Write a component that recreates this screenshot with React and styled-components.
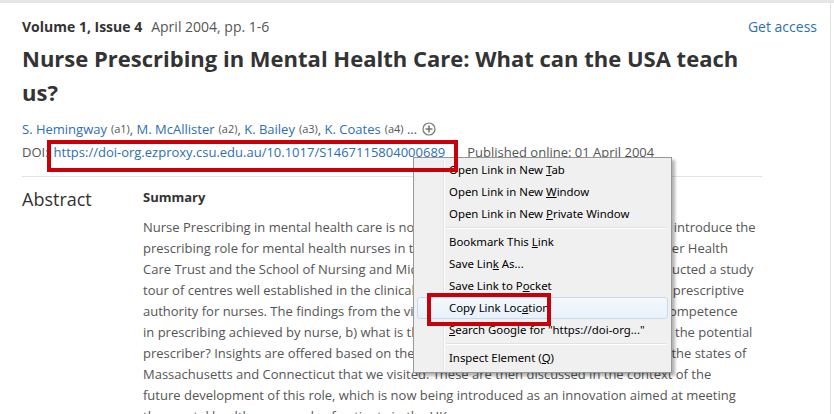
import React from "react";
import styled, { createGlobalStyle } from "styled-components";

const GlobalStyle = createGlobalStyle`
  html, body { margin: 0; padding: 0; background: #fff; }
  body { font-family: "Open Sans", "Noto Sans", sans-serif; }
`;

const Page = styled.div`
  position: relative;
  width: 834px;
  height: 414px;
  overflow: hidden;
  background: #fff;
  border-top: 3px solid #e6e6e6;
  box-sizing: border-box;
`;

const Card = styled.div`
  width: 831px;
  height: 100%;
  box-sizing: border-box;
  border-right: 1px solid #e0e0e0;
  padding: 14px 13px 0 22px;
  color: #333;
`;

const MetaRow = styled.div`
  display: flex;
  justify-content: space-between;
  align-items: center;
  font-size: 14px;
  line-height: 20px;
`;

const Issue = styled.span`
  font-weight: 700;
  color: #333;
  margin-right: 9px;
`;

const Muted = styled.span`
  color: #555;
  margin-left: ${(p) => p.$ml || 0}px;
`;

const Link = styled.a`
  color: #2d6fb0;
  text-decoration: none;
  margin-left: ${(p) => p.$ml || 0}px;
`;

const Title = styled.h1`
  margin: 4px 0 0;
  width: 740px;
  font-size: 22px;
  line-height: 34px;
  font-weight: 700;
  color: #333;
`;

const Line = styled.div`
  font-size: 13px;
  line-height: 22px;
  color: #555;
  margin-top: ${(p) => p.$mt || 0}px;
  display: flex;
  align-items: center;
  white-space: nowrap;
`;

const Sup = styled.sup`
  font-size: 11px;
  color: #555;
  vertical-align: 5px;
  margin-left: 4px;
  line-height: 0;
`;

const PlusIcon = styled.svg`
  margin-left: 5px;
  width: 14px;
  height: 14px;
`;

const Rule = styled.hr`
  border: 0;
  border-top: 1px solid #e3e3e3;
  margin: 13px 0 0;
  width: 740px;
`;

const AbstractGrid = styled.div`
  display: grid;
  grid-template-columns: 121px 1fr;
  margin-top: 10px;
`;

const AbstractHead = styled.h2`
  margin: 0;
  font-size: 18px;
  line-height: 24px;
  font-weight: 400;
  color: #333;
`;

const SummaryHead = styled.h3`
  margin: 0;
  font-size: 13px;
  line-height: 20px;
  font-weight: 700;
  color: #333;
`;

const Body = styled.div`
  margin-top: 10px;
  font-size: 13px;
  line-height: 21px;
  color: #555;
`;

const BodyLine = styled.span`
  display: block;
  white-space: nowrap;
`;

const Highlight = styled.div`
  position: absolute;
  left: ${(p) => p.$x}px;
  top: ${(p) => p.$y}px;
  width: ${(p) => p.$w}px;
  height: ${(p) => p.$h}px;
  box-sizing: border-box;
  border: 4px solid #c8000a;
  z-index: 5;
  pointer-events: none;
`;

const Menu = styled.div`
  position: absolute;
  left: 413px;
  top: 154px;
  width: 259px;
  box-sizing: border-box;
  padding: 1px 3px 3px;
  background: #f0f0f0;
  border: 1px solid #979797;
  box-shadow: 3px 3px 3px rgba(0, 0, 0, 0.3);
  font-family: "Noto Sans", "Open Sans", sans-serif;
  font-size: 11.4px;
  color: #000;
  z-index: 4;
  &::before {
    content: "";
    position: absolute;
    left: 29px;
    top: 2px;
    bottom: 2px;
    width: 1px;
    background: #e2e3e3;
    box-shadow: 1px 0 0 #fff;
  }
`;

const Item = styled.div`
  position: relative;
  height: 22px;
  line-height: 20px;
  padding-left: 31px;
  box-sizing: border-box;
  border: 1px solid ${(p) => (p.$active ? "#c6dbf1" : "transparent")};
  border-radius: 3px;
  background: ${(p) =>
    p.$active ? "linear-gradient(#f4f8fc, #e9f1fa)" : "transparent"};
  z-index: 1;
`;

const Sep = styled.div`
  height: 6px;
  position: relative;
  &::after {
    content: "";
    position: absolute;
    left: 29px;
    right: 1px;
    top: 2px;
    height: 1px;
    background: #e2e3e3;
    box-shadow: 0 1px 0 #fff;
  }
`;

const Key = styled.span`
  text-decoration: underline;
`;

const bodyLines = [
  "Nurse Prescribing in mental health care is now a reality in the UK. In order to effectively introduce the",
  "prescribing role for mental health nurses in the East Staffordshire Healthcare and Partner Health",
  "Care Trust and the School of Nursing and Midwifery at Keele University, UK, jointly conducted a study",
  "tour of centres well established in the clinical practice of nurse prescribing, with the full prescriptive",
  "authority for nurses. The findings from the visit are structured around: a) the levels of competence",
  "in prescribing achieved by nurse, b) what is the role of the specialist nurse and c) who is the potential",
  "prescriber? Insights are offered based on the experience of the US nurse prescribers in the states of",
  "Massachusetts and Connecticut that we visited. These are then discussed in the context of the",
  "future development of this role, which is now being introduced as an innovation aimed at meeting",
  "the mental health care needs of patients in the UK.",
];

export default function App() {
  return (
    <>
      <GlobalStyle />
      <Page>
        <Card>
          <MetaRow>
            <span>
              <Issue>Volume 1, Issue 4</Issue>
              <Muted>April 2004, pp. 1-6</Muted>
            </span>
            <Link href="#">Get access</Link>
          </MetaRow>
          <Title>
            Nurse Prescribing in Mental Health Care: What can the USA teach us?
          </Title>
          <Line $mt={9}>
            <Link href="#">S. Hemingway</Link>
            <Sup>(a1)</Sup>,&nbsp;
            <Link href="#">M. McAllister</Link>
            <Sup>(a2)</Sup>,&nbsp;
            <Link href="#">K. Bailey</Link>
            <Sup>(a3)</Sup>,&nbsp;
            <Link href="#">K. Coates</Link>
            <Sup>(a4)</Sup>&nbsp;...
            <PlusIcon viewBox="0 0 14 14">
              <circle cx="7" cy="7" r="6" fill="none" stroke="#777" strokeWidth="1.2" />
              <path d="M7 3.5v7M3.5 7h7" stroke="#777" strokeWidth="1.6" />
            </PlusIcon>
          </Line>
          <Line $mt={1}>
            DOI:
            <Link href="#" $ml={5}>https://doi-org.ezproxy.csu.edu.au/10.1017/S1467115804000689</Link>
            <Muted $ml={22}>Published online: 01 April 2004</Muted>
          </Line>
          <Rule />
          <AbstractGrid>
            <AbstractHead>Abstract</AbstractHead>
            <div>
              <SummaryHead>Summary</SummaryHead>
              <Body>
                {bodyLines.map((l, i) => (
                  <BodyLine key={i}>{l}</BodyLine>
                ))}
              </Body>
            </div>
          </AbstractGrid>
        </Card>

        <Highlight $x={47} $y={137} $w={411} $h={32} />
        <Highlight $x={427} $y={290} $w={124} $h={33} />

        <Menu>
          <Item>Open Link in New <Key>T</Key>ab</Item>
          <Item>Open Link in New <Key>W</Key>indow</Item>
          <Item>Open Link in New <Key>P</Key>rivate Window</Item>
          <Sep />
          <Item>Bookmark This <Key>L</Key>ink</Item>
          <Item>Save Lin<Key>k</Key> As...</Item>
          <Item>Save Link to P<Key>o</Key>cket</Item>
          <Item $active>Copy Link Loc<Key>a</Key>tion</Item>
          <Item><Key>S</Key>earch Google for "https://doi-org..."</Item>
          <Sep />
          <Item>Inspect Element (<Key>Q</Key>)</Item>
        </Menu>
      </Page>
    </>
  );
}
